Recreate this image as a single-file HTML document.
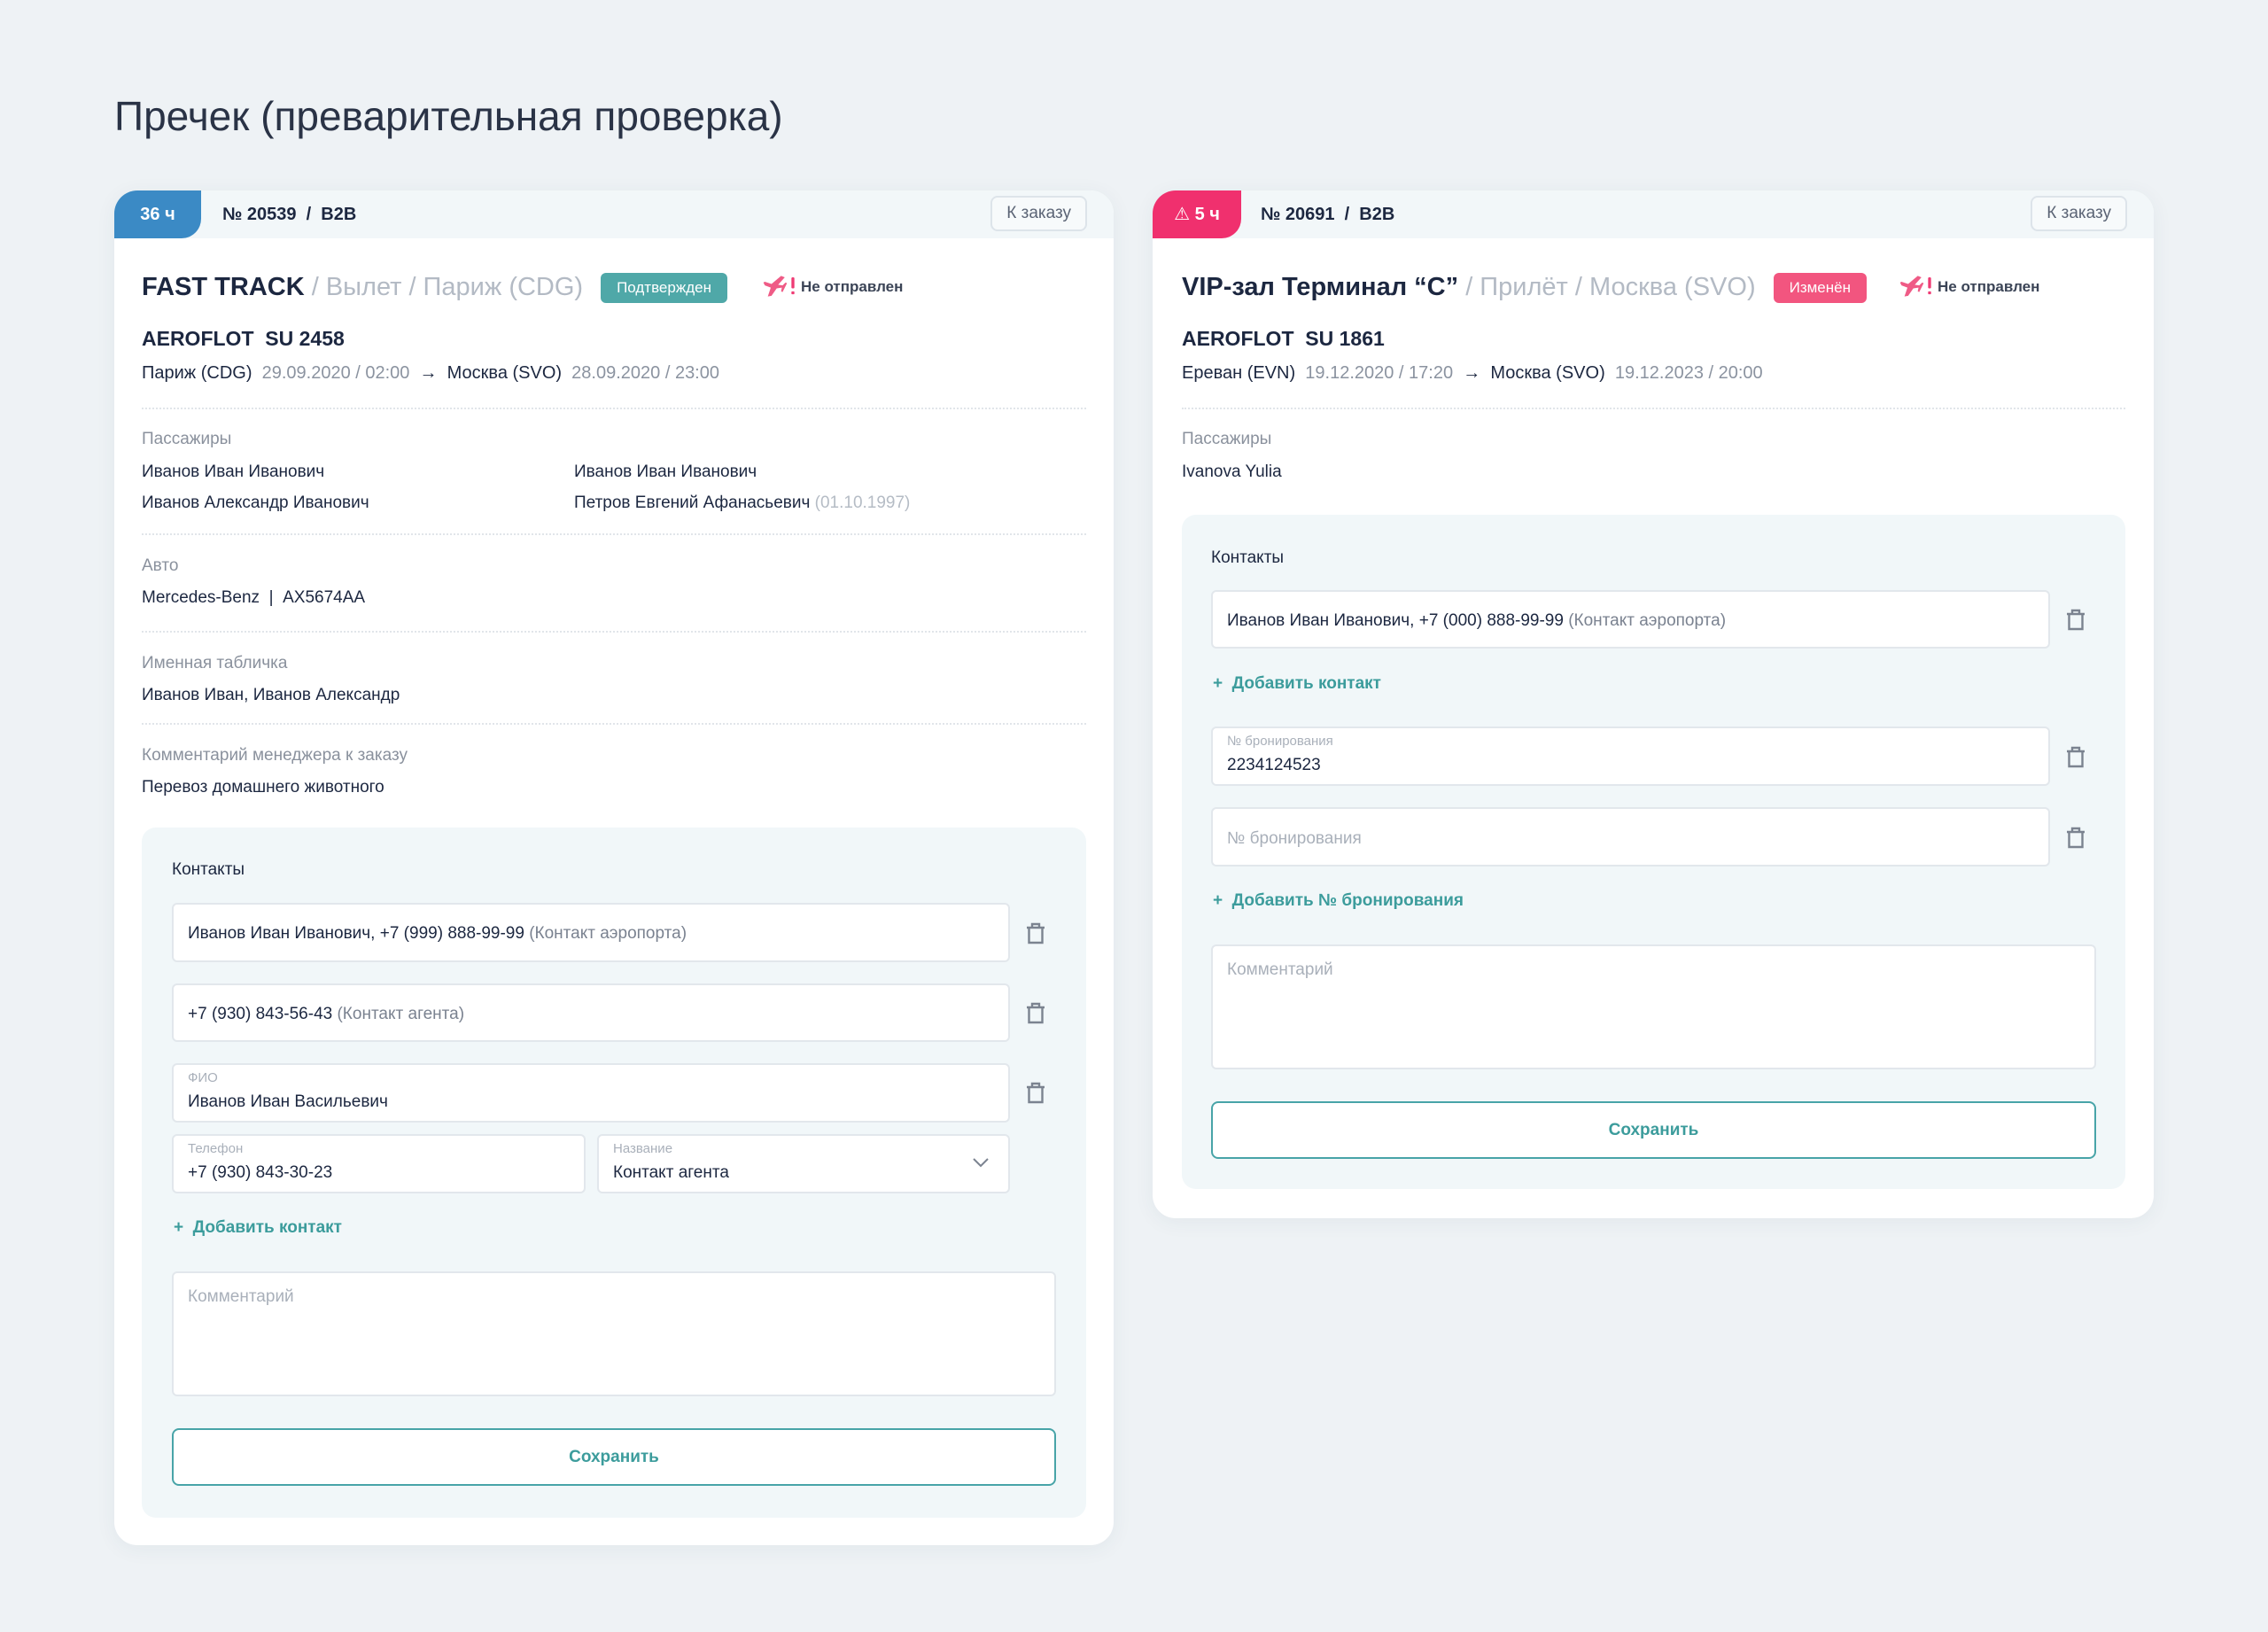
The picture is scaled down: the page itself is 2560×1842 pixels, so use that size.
<!DOCTYPE html>
<html><head><meta charset="utf-8"><style>
*{margin:0;padding:0;box-sizing:border-box}
body{width:2560px;height:1842px;background:#eef2f5;font-family:"Liberation Sans","DejaVu Sans",sans-serif;color:#1c2740;position:relative;overflow:hidden}
.a{position:absolute;white-space:nowrap}
.card{position:absolute;background:#fff;border-radius:26px;box-shadow:0 4px 24px rgba(40,60,90,.06);overflow:hidden}
.hd{position:absolute;left:0;top:0;right:0;height:54px;background:#f2f7f9}
.badge{position:absolute;left:0;top:0;height:54px;border-radius:0 0 22px 0;color:#fff;font-weight:bold;font-size:20px;line-height:54px;text-align:center}
.ord{position:absolute;top:0;line-height:54px;font-size:20px;font-weight:bold}
.kz{position:absolute;top:6px;height:40px;border:2px solid #dde4ea;border-radius:8px;background:#f7fafb;color:#5b6475;font-size:19px;line-height:36px;padding:0 16px}
.t1{font-size:29px;font-weight:bold;line-height:36px}
.t1 span{font-weight:normal;color:#b3bac4}
.t1 span.st{display:inline-block;vertical-align:middle;height:34px;line-height:34px;padding:0 18px;border-radius:6px;color:#fff;font-size:17px;font-weight:normal;margin-left:20px}
.ns{font-size:17px;font-weight:bold;color:#3b4456}
.fl{font-size:23px;font-weight:bold}
.rt{font-size:20px}
.rt i{font-style:normal;color:#8b93a0}
.lb{font-size:19px;color:#8a919d}
.tx{font-size:19px}
.dot{position:absolute;height:0;border-top:2px dotted #e1e5ea}
.box{position:absolute;background:#f1f7f9;border-radius:16px}
.inp{position:absolute;background:#fff;border:2px solid #e2e7ec;border-radius:6px}
.inp .v{position:absolute;left:16px;font-size:19px;color:#1c2740;white-space:nowrap}
.inp .v i{font-style:normal;color:#7a8290}
.inp .s{position:absolute;left:16px;top:6px;font-size:15px;color:#a9b0ba}
.ph{color:#a9b0ba!important}
.add{position:absolute;font-size:19px;font-weight:bold;color:#3c9c9c;white-space:nowrap}
.btn{position:absolute;border:2px solid #48a4a8;border-radius:8px;background:#fff;color:#3c9c9c;font-size:19px;font-weight:bold;text-align:center}
.tr{position:absolute;width:24px;height:26px}
</style></head><body>
<svg width="0" height="0" style="position:absolute"><defs>
<symbol id="trash" viewBox="0 0 24 26"><path d="M2 7H22M8 7V3H16V7M4.5 7V24H19.5V7" fill="none" stroke="#7b8390" stroke-width="2.4"/></symbol>
<symbol id="plane" viewBox="0 0 48 30"><path d="M26 1 L31 3 L22 13 L28 14 L32 10 L34 11 L31 17 L28 23 L26 22 L27 17 L20 18 L13 28 L8 29 L12 17 L4 14 L2 10 L4 9 L13 12 Z" fill="#ef5b86"/><rect x="40" y="3" width="4" height="15" rx="1.5" fill="#ef3b74"/><rect x="40" y="22" width="4" height="4" rx="1" fill="#ef3b74"/></symbol>
</defs></svg>

<div class="a" style="left:129px;top:101px;font-size:46px;color:#2a3346;line-height:60px">Пречек (преварительная проверка)</div>

<!-- LEFT CARD -->
<div class="card" style="left:129px;top:215px;width:1128px;height:1529px">
<div class="hd"></div>
<div class="badge" style="width:98px;background:#3b8ac5">36 ч</div>
<div class="ord" style="left:122px">№ 20539 &nbsp;/ &nbsp;B2B</div>
<div class="kz" style="right:30px">К заказу</div>
</div>
<div class="a t1" style="left:160px;top:306px">FAST TRACK <span>/ Вылет / Париж (CDG)</span><span class="st" style="background:#4fa8a8">Подтвержден</span></div>
<svg class="a" style="left:860px;top:310px" width="40" height="26"><use href="#plane"/></svg>
<div class="a ns" style="left:904px;top:314px">Не отправлен</div>
<div class="a fl" style="left:160px;top:369px">AEROFLOT &nbsp;SU 2458</div>
<div class="a rt" style="left:160px;top:410px">Париж (CDG) &nbsp;<i>29.09.2020 / 02:00</i> &nbsp;→ &nbsp;Москва (SVO) &nbsp;<i>28.09.2020 / 23:00</i></div>
<div class="dot" style="left:160px;width:1066px;top:460px"></div>
<div class="a lb" style="left:160px;top:485px">Пассажиры</div>
<div class="a tx" style="left:160px;top:522px">Иванов Иван Иванович</div>
<div class="a tx" style="left:648px;top:522px">Иванов Иван Иванович</div>
<div class="a tx" style="left:160px;top:557px">Иванов Александр Иванович</div>
<div class="a tx" style="left:648px;top:557px">Петров Евгений Афанасьевич <span style="color:#b5bcc5">(01.10.1997)</span></div>
<div class="dot" style="left:160px;width:1066px;top:602px"></div>
<div class="a lb" style="left:160px;top:628px">Авто</div>
<div class="a tx" style="left:160px;top:664px">Mercedes-Benz &nbsp;| &nbsp;AX5674AA</div>
<div class="dot" style="left:160px;width:1066px;top:712px"></div>
<div class="a lb" style="left:160px;top:738px">Именная табличка</div>
<div class="a tx" style="left:160px;top:774px">Иванов Иван, Иванов Александр</div>
<div class="dot" style="left:160px;width:1066px;top:816px"></div>
<div class="a lb" style="left:160px;top:842px">Комментарий менеджера к заказу</div>
<div class="a tx" style="left:160px;top:878px">Перевоз домашнего животного</div>

<div class="box" style="left:160px;top:934px;width:1066px;height:779px"></div>
<div class="a tx" style="left:194px;top:971px">Контакты</div>
<div class="inp" style="left:194px;top:1019px;width:946px;height:67px"><div class="v" style="top:22px">Иванов Иван Иванович, +7 (999) 888-99-99 <i>(Контакт аэропорта)</i></div></div>
<svg class="tr" style="left:1157px;top:1040px"><use href="#trash"/></svg>
<div class="inp" style="left:194px;top:1110px;width:946px;height:66px"><div class="v" style="top:22px">+7 (930) 843-56-43 <i>(Контакт агента)</i></div></div>
<svg class="tr" style="left:1157px;top:1130px"><use href="#trash"/></svg>
<div class="inp" style="left:194px;top:1200px;width:946px;height:67px"><div class="s">ФИО</div><div class="v" style="top:31px">Иванов Иван Васильевич</div></div>
<svg class="tr" style="left:1157px;top:1220px"><use href="#trash"/></svg>
<div class="inp" style="left:194px;top:1280px;width:467px;height:67px"><div class="s">Телефон</div><div class="v" style="top:31px">+7 (930) 843-30-23</div></div>
<div class="inp" style="left:674px;top:1280px;width:466px;height:67px"><div class="s">Название</div><div class="v" style="top:31px">Контакт агента</div>
<svg style="position:absolute;right:22px;top:24px" width="18" height="12"><path d="M1 2L9 10L17 2" fill="none" stroke="#7b8390" stroke-width="2"/></svg></div>
<div class="add" style="left:196px;top:1375px">+ &nbsp;Добавить контакт</div>
<div class="inp" style="left:194px;top:1435px;width:998px;height:141px"><div class="v ph" style="top:16px">Комментарий</div></div>
<div class="btn" style="left:194px;top:1612px;width:998px;height:65px;line-height:61px">Сохранить</div>

<!-- RIGHT CARD -->
<div class="card" style="left:1301px;top:215px;width:1130px;height:1160px">
<div class="hd"></div>
<div class="badge" style="width:100px;background:#f0306e">⚠ 5 ч</div>
<div class="ord" style="left:122px">№ 20691 &nbsp;/ &nbsp;B2B</div>
<div class="kz" style="right:30px">К заказу</div>
</div>
<div class="a t1" style="left:1334px;top:306px">VIP-зал Терминал “C” <span>/ Прилёт / Москва (SVO)</span><span class="st" style="background:#f2557f">Изменён</span></div>
<svg class="a" style="left:2143px;top:310px" width="40" height="26"><use href="#plane"/></svg>
<div class="a ns" style="left:2187px;top:314px">Не отправлен</div>
<div class="a fl" style="left:1334px;top:369px">AEROFLOT &nbsp;SU 1861</div>
<div class="a rt" style="left:1334px;top:410px">Ереван (EVN) &nbsp;<i>19.12.2020 / 17:20</i> &nbsp;→ &nbsp;Москва (SVO) &nbsp;<i>19.12.2023 / 20:00</i></div>
<div class="dot" style="left:1334px;width:1065px;top:460px"></div>
<div class="a lb" style="left:1334px;top:485px">Пассажиры</div>
<div class="a tx" style="left:1334px;top:522px">Ivanova Yulia</div>

<div class="box" style="left:1334px;top:581px;width:1065px;height:761px"></div>
<div class="a tx" style="left:1367px;top:619px">Контакты</div>
<div class="inp" style="left:1367px;top:666px;width:947px;height:66px"><div class="v" style="top:22px">Иванов Иван Иванович, +7 (000) 888-99-99 <i>(Контакт аэропорта)</i></div></div>
<svg class="tr" style="left:2331px;top:686px"><use href="#trash"/></svg>
<div class="add" style="left:1369px;top:761px">+ &nbsp;Добавить контакт</div>
<div class="inp" style="left:1367px;top:820px;width:947px;height:67px"><div class="s">№ бронирования</div><div class="v" style="top:31px">2234124523</div></div>
<svg class="tr" style="left:2331px;top:841px"><use href="#trash"/></svg>
<div class="inp" style="left:1367px;top:911px;width:947px;height:67px"><div class="v ph" style="top:23px">№ бронирования</div></div>
<svg class="tr" style="left:2331px;top:932px"><use href="#trash"/></svg>
<div class="add" style="left:1369px;top:1006px">+ &nbsp;Добавить № бронирования</div>
<div class="inp" style="left:1367px;top:1066px;width:999px;height:141px"><div class="v ph" style="top:16px">Комментарий</div></div>
<div class="btn" style="left:1367px;top:1243px;width:999px;height:65px;line-height:61px">Сохранить</div>
</body></html>
